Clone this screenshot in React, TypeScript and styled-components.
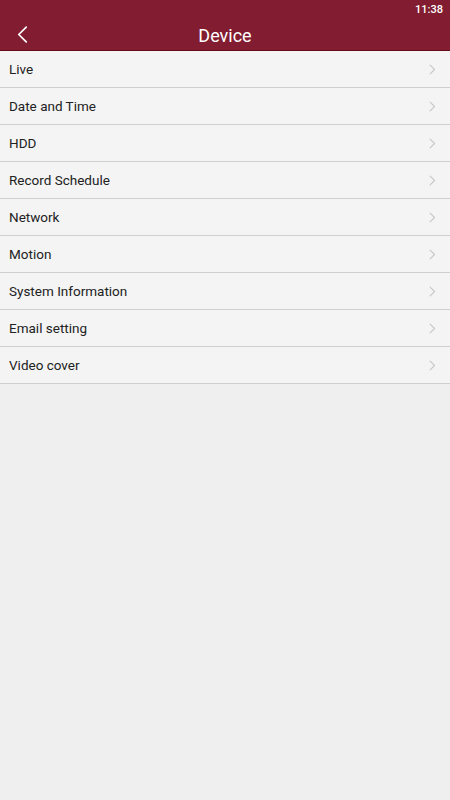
import React from "react";
import styled, { createGlobalStyle } from "styled-components";

const GlobalStyle = createGlobalStyle`
  html, body {
    margin: 0;
    padding: 0;
    background: #efefef;
    font-family: Roboto, "Noto Sans", sans-serif;
  }
  #root {
    min-height: 800px;
  }
`;

const items = [
  "Live",
  "Date and Time",
  "HDD",
  "Record Schedule",
  "Network",
  "Motion",
  "System Information",
  "Email setting",
  "Video cover",
];

const Screen = styled.div`
  width: 450px;
  min-height: 800px;
  background: #efefef;
`;

const Header = styled.header`
  background: #821c30;
  border-bottom: 1px solid #6a0a18;
`;

const StatusBar = styled.div`
  height: 18px;
  display: flex;
  justify-content: flex-end;
  align-items: center;
  padding-right: 7px;
  color: #fff;
  font-size: 11px;
  font-weight: 500;
`;

const Toolbar = styled.div`
  height: 32px;
  display: grid;
  grid-template-columns: 50px 1fr 50px;
  align-items: center;
`;

const BackButton = styled.button`
  background: none;
  border: none;
  padding: 0 0 0 17px;
  height: 100%;
  display: flex;
  align-items: center;
  cursor: pointer;
`;

const Title = styled.h1`
  margin: 0;
  text-align: center;
  color: #fff;
  font-size: 18px;
  font-weight: 400;
  padding-top: 2px;
`;

const List = styled.ul`
  list-style: none;
  margin: 0;
  padding: 0;
`;

const Row = styled.li`
  height: 36px;
  display: flex;
  align-items: center;
  justify-content: space-between;
  padding: 0 14px 0 9px;
  background: #f4f4f4;
  border-bottom: 1px solid #cfcfcf;
  color: #222;
  font-size: 13.5px;
`;

const Chevron = ({ color, w, h }: { color: string; w: number; h: number }) => (
  <svg width={w} height={h} viewBox="0 0 10 16" fill="none">
    <path d="M1.5 1.5 L8 8 L1.5 14.5" stroke={color} strokeWidth="1.6" strokeLinecap="round" strokeLinejoin="round" />
  </svg>
);

const BackIcon = () => (
  <svg width={11} height={17} viewBox="0 0 10 16" fill="none">
    <path d="M8.5 1 L1.5 8 L8.5 15" stroke="#fff" strokeWidth="1.6" strokeLinecap="round" strokeLinejoin="round" />
  </svg>
);

export default function App() {
  return (
    <Screen>
      <GlobalStyle />
      <Header>
        <StatusBar>11:38</StatusBar>
        <Toolbar>
          <BackButton aria-label="Back">
            <BackIcon />
          </BackButton>
          <Title>Device</Title>
          <span />
        </Toolbar>
      </Header>
      <List>
        {items.map((label) => (
          <Row key={label}>
            <span>{label}</span>
            <Chevron color="#c8c8c8" w={7} h={11} />
          </Row>
        ))}
      </List>
    </Screen>
  );
}
